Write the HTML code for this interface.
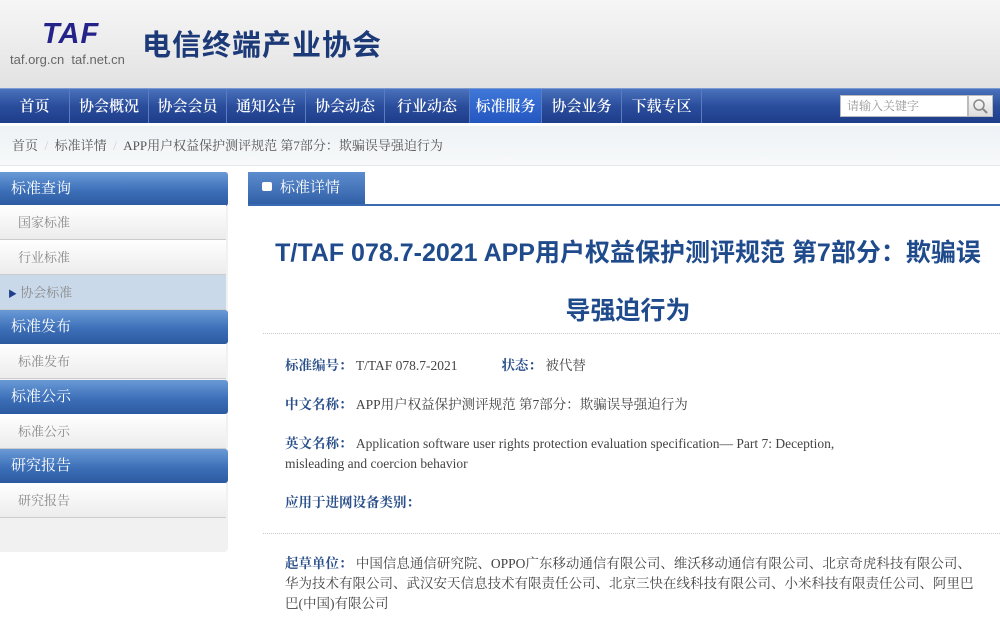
<!DOCTYPE html>
<html><head><meta charset="utf-8"><style>
*{margin:0;padding:0;box-sizing:border-box}
body{width:1000px;height:623px;overflow:hidden;background:#fff;font-family:"Liberation Serif","Noto Serif CJK SC",serif;position:relative}
.abs{position:absolute}
#hdr{left:0;top:0;width:1000px;height:88px;background:linear-gradient(#f6f6f6,#e2e2e2)}
#logo{left:42px;top:18px;font:italic 900 29px "Liberation Sans",sans-serif;color:#23238a;letter-spacing:1px}
#dom{left:10px;top:52px;font:13px "Liberation Sans",sans-serif;color:#666}
#ttl{left:142px;top:22px;font:600 29px "Noto Sans CJK SC",sans-serif;color:#1d3a78;letter-spacing:1px}
#nav{left:0;top:88px;width:1000px;height:35px;background:linear-gradient(#4b72bd,#2a4d9c 50%,#1e3d8a);border-top:1px solid #7b9ad2}
.ni{position:absolute;top:0;height:34px;line-height:34px;color:#fff;font-size:15px;font-family:"Noto Serif CJK SC",serif;font-weight:600;text-align:center;border-right:1px solid #5a7cc0}
#srch{left:840px;top:95px;width:128px;height:22px;background:#fff;border:1px solid #bbb;font:12px "Noto Serif CJK SC",serif;color:#999;line-height:20px;padding-left:6px}
#sb{left:968px;top:95px;width:25px;height:22px;background:linear-gradient(#fafafa,#ddd);border:1px solid #bbb}
#bc{left:0;top:126px;width:1000px;height:40px;background:linear-gradient(#eef2f5,#f7f9fa);border-bottom:1px solid #e3e6ea;font-size:13px;color:#555;line-height:40px;padding-left:12px}
.sh{position:absolute;left:0;width:228px;height:34px;background:linear-gradient(#6a9ad6,#3c6fb8 55%,#2c5aa0);color:#fff;font-size:15px;line-height:34px;padding-left:11px;border-radius:0 3px 3px 0}
.si{position:absolute;left:0;width:226px;height:35px;background:linear-gradient(#fff,#ececec);border-bottom:1px solid #ccc;color:#888;font-size:13px;line-height:35px;padding-left:18px}
#tab{left:248px;top:172px;width:117px;height:33px;background:linear-gradient(#5d8dce,#2f5ea6);color:#fff;font-size:15px;line-height:33px;padding-left:14px}
#tline{left:248px;top:204px;width:752px;height:2px;background:#3b6ab0}
.t1{left:248px;width:760px;text-align:center;font:bold 25px "Liberation Sans","Noto Sans CJK SC",sans-serif;color:#1f4b8c;white-space:nowrap}
.dot{left:263px;width:737px;border-top:1px dotted #c8c8c8;height:1px}
.f{left:285px;font-size:13.5px;color:#444;line-height:20px}
.f b{color:#2a4f8a}
</style></head><body>
<div id="hdr" class="abs"></div>
<div id="logo" class="abs">TAF</div>
<div id="dom" class="abs">taf.org.cn&nbsp; taf.net.cn</div>
<div id="ttl" class="abs">电信终端产业协会</div>
<div id="nav" class="abs">
<div class="ni" style="left:0;width:70px">首页</div>
<div class="ni" style="left:70px;width:79px">协会概况</div>
<div class="ni" style="left:149px;width:78px">协会会员</div>
<div class="ni" style="left:227px;width:79px">通知公告</div>
<div class="ni" style="left:306px;width:79px">协会动态</div>
<div class="ni" style="left:385px;width:85px">行业动态</div>
<div class="ni" style="left:470px;width:72px;background:linear-gradient(#3f78d8,#2456c0)">标准服务</div>
<div class="ni" style="left:542px;width:80px">协会业务</div>
<div class="ni" style="left:622px;width:80px">下载专区</div>
</div>
<div id="srch" class="abs">请输入关键字</div>
<div id="sb" class="abs"><svg width="23" height="20"><circle cx="10" cy="9" r="5" fill="none" stroke="#888" stroke-width="1.5"/><line x1="14" y1="13" x2="18" y2="17" stroke="#888" stroke-width="2"/></svg></div>
<div id="bc" class="abs">首页 <span style="color:#ccc">&nbsp;/&nbsp;</span> 标准详情 <span style="color:#ccc">&nbsp;/&nbsp;</span> APP用户权益保护测评规范 第7部分：欺骗误导强迫行为</div>

<div class="abs" style="left:0;top:172px;width:228px;height:380px;background:#f1f1f1;border-radius:0 0 4px 0"></div>
<div class="sh" style="top:172px">标准查询</div>
<div class="si" style="top:205px">国家标准</div>
<div class="si" style="top:240px">行业标准</div>
<div class="si" style="top:275px;background:#c9d9ea;padding-left:8px"><span style="color:#1e3f8a;font-size:9px">▶</span> 协会标准</div>
<div class="sh" style="top:310px">标准发布</div>
<div class="si" style="top:344px">标准发布</div>
<div class="sh" style="top:380px">标准公示</div>
<div class="si" style="top:414px">标准公示</div>
<div class="sh" style="top:449px">研究报告</div>
<div class="si" style="top:483px">研究报告</div>

<div id="tab" class="abs"><span style="display:inline-block;width:10px;height:9px;background:#fff;border-radius:2px;vertical-align:1px;margin-right:8px"></span>标准详情</div>
<div id="tline" class="abs"></div>
<div class="abs t1" style="top:233px">T/TAF 078.7-2021 APP用户权益保护测评规范 第7部分：欺骗误</div>
<div class="abs t1" style="top:291px">导强迫行为</div>
<div class="abs dot" style="top:333px"></div>
<div class="abs f" style="top:356px"><b>标准编号：</b> T/TAF 078.7-2021<span style="display:inline-block;width:44px"></span><b>状态：</b> 被代替</div>
<div class="abs f" style="top:395px"><b>中文名称：</b> APP用户权益保护测评规范 第7部分：欺骗误导强迫行为</div>
<div class="abs f" style="top:434px;width:700px"><b>英文名称：</b> Application software user rights protection evaluation specification— Part 7: Deception,<br>misleading and coercion behavior</div>
<div class="abs f" style="top:493px"><b>应用于进网设备类别：</b></div>
<div class="abs dot" style="top:533px"></div>
<div class="abs f" style="top:554px;width:695px"><b>起草单位：</b> 中国信息通信研究院、OPPO广东移动通信有限公司、维沃移动通信有限公司、北京奇虎科技有限公司、华为技术有限公司、武汉安天信息技术有限责任公司、北京三快在线科技有限公司、小米科技有限责任公司、阿里巴巴(中国)有限公司</div>
</body></html>
